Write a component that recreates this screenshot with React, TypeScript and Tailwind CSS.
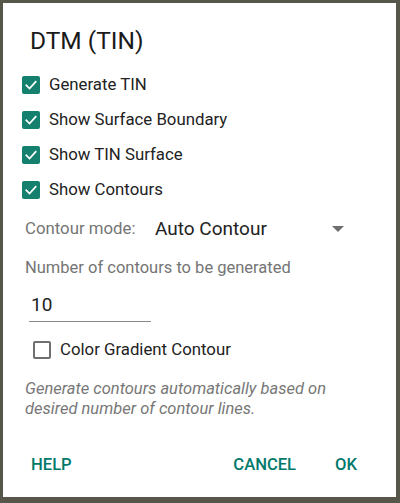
import { useState } from 'react';

const TEAL = 'bg-[#16806f]';

function CheckRow({ label, checked, className = '' }: { label: string; checked: boolean; className?: string }) {
  return (
    <div className={`flex h-[35px] items-center ${className}`}>
      {checked ? (
        <span className={`flex h-[18px] w-[18px] items-center justify-center rounded-[2px] ${TEAL}`}>
          <svg width="14" height="14" viewBox="0 0 24 24" fill="none" stroke="white" strokeWidth="3" strokeLinecap="square">
            <polyline points="4 12.5 9.5 18 20 6.5" />
          </svg>
        </span>
      ) : (
        <span className="h-[18px] w-[18px] rounded-[2px] border-2 border-[#6f6f6f]" />
      )}
      <span className="ml-[9px] text-[16.8px] text-[#222]">{label}</span>
    </div>
  );
}

export default function App() {
  const [count] = useState('10');

  return (
    <div className="h-[503px] w-[400px] bg-[#57564a] p-[3px] pr-[4px] pb-[6px] font-['Roboto',sans-serif]">
      <div className="flex h-full flex-col bg-white">
        <h1 className="mt-[24px] ml-[27px] text-[24.5px] leading-[28px] font-normal text-[#1a1a1a]">DTM (TIN)</h1>

        <div className="mt-[12px] ml-[19px]">
          <CheckRow label="Generate TIN" checked />
          <CheckRow label="Show Surface Boundary" checked />
          <CheckRow label="Show TIN Surface" checked />
          <CheckRow label="Show Contours" checked />
        </div>

        <div className="mt-[4px] ml-[22px] mr-[52px] flex h-[36px] items-center">
          <span className="w-[130px] text-[16.8px] text-[#757575]">Contour mode:</span>
          <span className="flex-1 text-[19px] text-[#222]">Auto Contour</span>
          <svg width="12" height="7" viewBox="0 0 12 7">
            <polygon points="0,0 12,0 6,6" fill="#6e6e6e" />
          </svg>
        </div>

        <div className="mt-[11px] ml-[22px] text-[16.5px] leading-[20px] text-[#757575]">Number of contours to be generated</div>

        <div className="mt-[16px] ml-[26px] w-[122px] border-b border-[#8a8a8a] pb-[5px] pl-[2px] text-[19px] leading-[22px] text-[#222]">
          {count}
        </div>

        <CheckRow label="Color Gradient Contour" checked={false} className="mt-[10px] ml-[30px]" />

        <p className="mt-[12px] ml-[22px] mr-[40px] text-[16.5px] leading-[19.5px] text-[#777] italic">
          Generate contours automatically based on desired number of contour lines.
        </p>

        <div className="mt-auto mb-[22px] flex items-center px-[28px] text-[16.6px] leading-[20px] font-medium text-[#00796b]">
          <span>HELP</span>
          <span className="ml-auto">CANCEL</span>
          <span className="ml-[39px] mr-[11px]">OK</span>
        </div>
      </div>
    </div>
  );
}
